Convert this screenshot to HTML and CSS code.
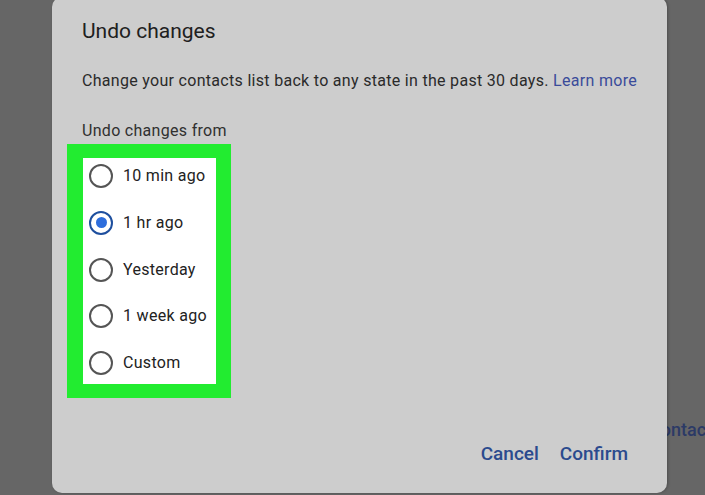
FILE: index.html
```html
<!DOCTYPE html>
<html lang="en">
<head>
<meta charset="utf-8">
<title>Undo changes</title>
<link rel="stylesheet" href="styles.css">
</head>
<body>
<div class="page">
  <div class="behind">Contacts</div>
  <div class="dialog">
    <h1 class="title">Undo changes</h1>
    <p class="desc">Change your contacts list back to any state in the past 30 days. <a class="link" href="#">Learn more</a></p>
    <div class="group-label">Undo changes from</div>
    <div class="highlight">
      <div class="options">
        <label class="option"><span class="radio"></span><span class="opt-text">10 min ago</span></label>
        <label class="option"><span class="radio checked"></span><span class="opt-text">1 hr ago</span></label>
        <label class="option"><span class="radio"></span><span class="opt-text">Yesterday</span></label>
        <label class="option"><span class="radio"></span><span class="opt-text">1 week ago</span></label>
        <label class="option"><span class="radio"></span><span class="opt-text">Custom</span></label>
      </div>
    </div>
    <div class="actions">
      <span class="btn">Cancel</span>
      <span class="btn">Confirm</span>
    </div>
  </div>
</div>
</body>
</html>
```
FILE: styles.css
```css
html, body {
  margin: 0;
  padding: 0;
}
body {
  background: #666666;
  font-family: Roboto, "Liberation Sans", sans-serif;
  width: 705px;
  height: 495px;
  overflow: hidden;
}
.page {
  position: relative;
  width: 705px;
  height: 495px;
}
.behind {
  position: absolute;
  left: 649px;
  top: 421px;
  font-size: 18px;
  line-height: 24px;
  font-weight: 500;
  color: #2c3a66;
}
.dialog {
  position: relative;
  z-index: 1;
  box-sizing: border-box;
  margin: -3px 0 0 52px;
  width: 615px;
  height: 496px;
  background: #cdcdcd;
  border-radius: 10px;
  box-shadow: 1px 0 3px rgba(0, 0, 0, 0.25);
  padding: 22px 39px 0 30px;
  display: flex;
  flex-direction: column;
}
.title {
  margin: 0;
  font-size: 21px;
  line-height: 24px;
  font-weight: 400;
  color: #202020;
}
.desc {
  margin: 28px -20px 0 0;
  font-size: 16px;
  line-height: 20px;
  letter-spacing: 0.3px;
  white-space: nowrap;
  color: #2a2a2a;
}
.link {
  color: #3a4b9a;
  text-decoration: none;
}
.group-label {
  margin-top: 30px;
  font-size: 16px;
  line-height: 20px;
  letter-spacing: 0.3px;
  color: #303030;
}
.highlight {
  margin: 3px 0 0 -15px;
  align-self: flex-start;
  border-style: solid;
  border-color: #22ec30;
  border-width: 14px 15px 14px 16px;
  background: #ffffff;
}
.options {
  box-sizing: border-box;
  width: 133px;
  height: 226px;
  padding: 6px 0 0 6px;
  display: flex;
  flex-direction: column;
  gap: 22.75px;
}
.option {
  display: flex;
  align-items: center;
  gap: 10px;
  height: 24px;
}
.radio {
  box-sizing: border-box;
  width: 24px;
  height: 24px;
  border: 2.5px solid #555555;
  border-radius: 50%;
  display: flex;
  align-items: center;
  justify-content: center;
  flex: none;
}
.radio.checked {
  border-color: #1e4f9e;
}
.radio.checked::after {
  content: "";
  width: 11px;
  height: 11px;
  border-radius: 50%;
  background: #2d6ddc;
}
.opt-text {
  font-size: 16px;
  line-height: 20px;
  letter-spacing: 0.3px;
  color: #222222;
}
.actions {
  margin-top: auto;
  padding-bottom: 27px;
  display: flex;
  justify-content: flex-end;
  gap: 21px;
}
.btn {
  font-size: 19px;
  line-height: 24px;
  font-weight: 500;
  color: #2b4a8e;
}
```
